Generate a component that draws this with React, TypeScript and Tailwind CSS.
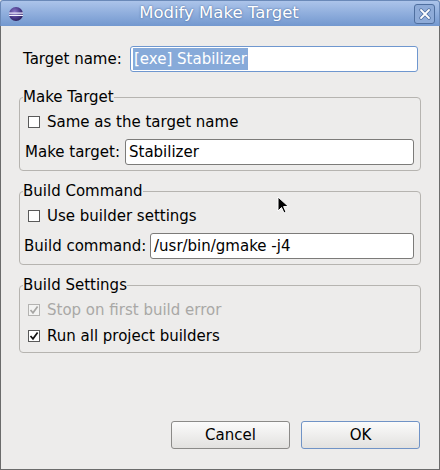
import React from "react";

const font = { fontFamily: '"DejaVu Sans", Verdana, sans-serif' };

function EclipseIcon() {
  return (
    <svg width="16" height="16" viewBox="0 0 16 16">
      <defs>
        <radialGradient id="ecl" cx="40%" cy="35%" r="70%">
          <stop offset="0%" stopColor="#8a78c8" />
          <stop offset="60%" stopColor="#4a3a8a" />
          <stop offset="100%" stopColor="#2a1f5a" />
        </radialGradient>
      </defs>
      <circle cx="8" cy="8" r="7" fill="url(#ecl)" />
      <rect x="1" y="6.5" width="14" height="1.2" fill="#f4f2ff" />
      <rect x="1" y="8.8" width="14" height="1.2" fill="#f4f2ff" />
    </svg>
  );
}

function CloseButton() {
  return (
    <div className="w-[21px] h-[20px] rounded-[3px] border border-[#4f6f9f] bg-[#8eabd8] flex items-center justify-center">
      <svg width="12" height="12" viewBox="0 0 12 12">
        <path d="M2 2 L10 10 M10 2 L2 10" stroke="#4f6f9f" strokeWidth="3.4" strokeLinecap="round" />
        <path d="M2 2 L10 10 M10 2 L2 10" stroke="#ffffff" strokeWidth="1.8" strokeLinecap="round" />
      </svg>
    </div>
  );
}

interface CheckProps {
  checked?: boolean;
  disabled?: boolean;
  label: string;
}

function Check({ checked, disabled, label }: CheckProps) {
  return (
    <div className="flex items-center h-[26px]">
      <div
        className={
          disabled
            ? "w-[12px] h-[12px] border border-[#b4b3b1] bg-[#f3f3f2] flex items-center justify-center"
            : "w-[12px] h-[12px] border border-[#5a5a5a] bg-white flex items-center justify-center"
        }
      >
        {checked && (
          <svg width="10" height="10" viewBox="0 0 10 10">
            <path
              d="M1.5 5 L4 7.8 L8.6 1.6"
              fill="none"
              stroke={disabled ? "#a7a6a4" : "#111111"}
              strokeWidth="1.7"
            />
          </svg>
        )}
      </div>
      <span className={disabled ? "ml-[7px] text-[#a9a8a6]" : "ml-[7px] text-black"}>{label}</span>
    </div>
  );
}

interface FieldProps {
  label: string;
  value: string;
  inputWidth: string;
}

function Field({ label, value, inputWidth }: FieldProps) {
  return (
    <div className="flex items-center justify-between h-[26px]">
      <span>{label}</span>
      <div className={`${inputWidth} h-[26px] bg-white border border-[#7c7b79] rounded-[3px] flex items-center pl-[3px]`}>
        {value}
      </div>
    </div>
  );
}

interface GroupProps {
  title: string;
  className: string;
  children: React.ReactNode;
}

function Group({ title, className, children }: GroupProps) {
  return (
    <fieldset className={`border border-[#b6b4b0] rounded-[4px] pl-[3px] pr-[6px] ${className}`}>
      <legend className="px-0 leading-[18px]">{title}</legend>
      {children}
    </fieldset>
  );
}

export default function App() {
  return (
    <div className="w-[440px] h-[470px] bg-[#edeceb] text-[15px] text-black flex flex-col" style={font}>
      {/* title bar */}
      <div className="h-[26px] flex items-center pl-[7px] pr-[4px] bg-gradient-to-b from-[#acc4ea] to-[#7398cf] border border-[#6a89b8] border-b-0 rounded-t-[3px]">
        <EclipseIcon />
        <div className="flex-1 text-center text-white text-[16.5px] [text-shadow:0_0_2px_#3e5f92]">Modify Make Target</div>
        <CloseButton />
      </div>

      <div className="flex-1 flex flex-col border border-t-0 border-[#6b6b6b] px-[18px]">
        <div className="flex items-center justify-between mt-[20px] pl-[4px] pr-[3px]">
          <span>Target name:</span>
          <div className="w-[288px] h-[26px] bg-white border border-[#6f97cf] rounded-[3px] flex items-center pl-[2px]">
            <span className="bg-[#87aad9] text-white px-[1px]">[exe] Stabilizer</span>
          </div>
        </div>

        <Group title="Make Target" className="mt-[16px] h-[83px]">
          <div className="pl-[5px] mt-[3px]">
            <Check label="Same as the target name" />
          </div>
          <div className="pl-[2px] mt-[4px]">
            <Field label="Make target:" value="Stabilizer" inputWidth="w-[289px]" />
          </div>
        </Group>

        <Group title="Build Command" className="mt-[11px] h-[83px]">
          <div className="pl-[5px] mt-[3px]">
            <Check label="Use builder settings" />
          </div>
          <div className="pl-[1px] mt-[4px]">
            <Field label="Build command:" value="/usr/bin/gmake -j4" inputWidth="w-[264px]" />
          </div>
        </Group>

        <Group title="Build Settings" className="mt-[11px] h-[77px]">
          <div className="pl-[5px] mt-[3px]">
            <Check label="Stop on first build error" checked disabled />
            <Check label="Run all project builders" checked />
          </div>
        </Group>

        <div className="flex-1" />

        <div className="flex justify-end gap-[11px] mb-[20px] pr-[1px]">
          <button className="w-[119px] h-[28px] rounded-[3px] border border-[#8b8a88] bg-gradient-to-b from-[#fbfbfb] to-[#e2e1df]">
            Cancel
          </button>
          <button className="w-[119px] h-[28px] rounded-[3px] border border-[#7093c6] bg-gradient-to-b from-[#fbfbfb] to-[#e2e1df]">
            OK
          </button>
        </div>
      </div>

      {/* mouse pointer */}
      <svg className="absolute left-[277px] top-[196px]" width="14" height="20" viewBox="0 0 14 20">
        <path d="M1 1 L1 15 L4.5 11.5 L7 17 L9 16 L6.6 10.6 L11.5 10.6 Z" fill="#000" stroke="#fff" strokeWidth="1" />
      </svg>
    </div>
  );
}
